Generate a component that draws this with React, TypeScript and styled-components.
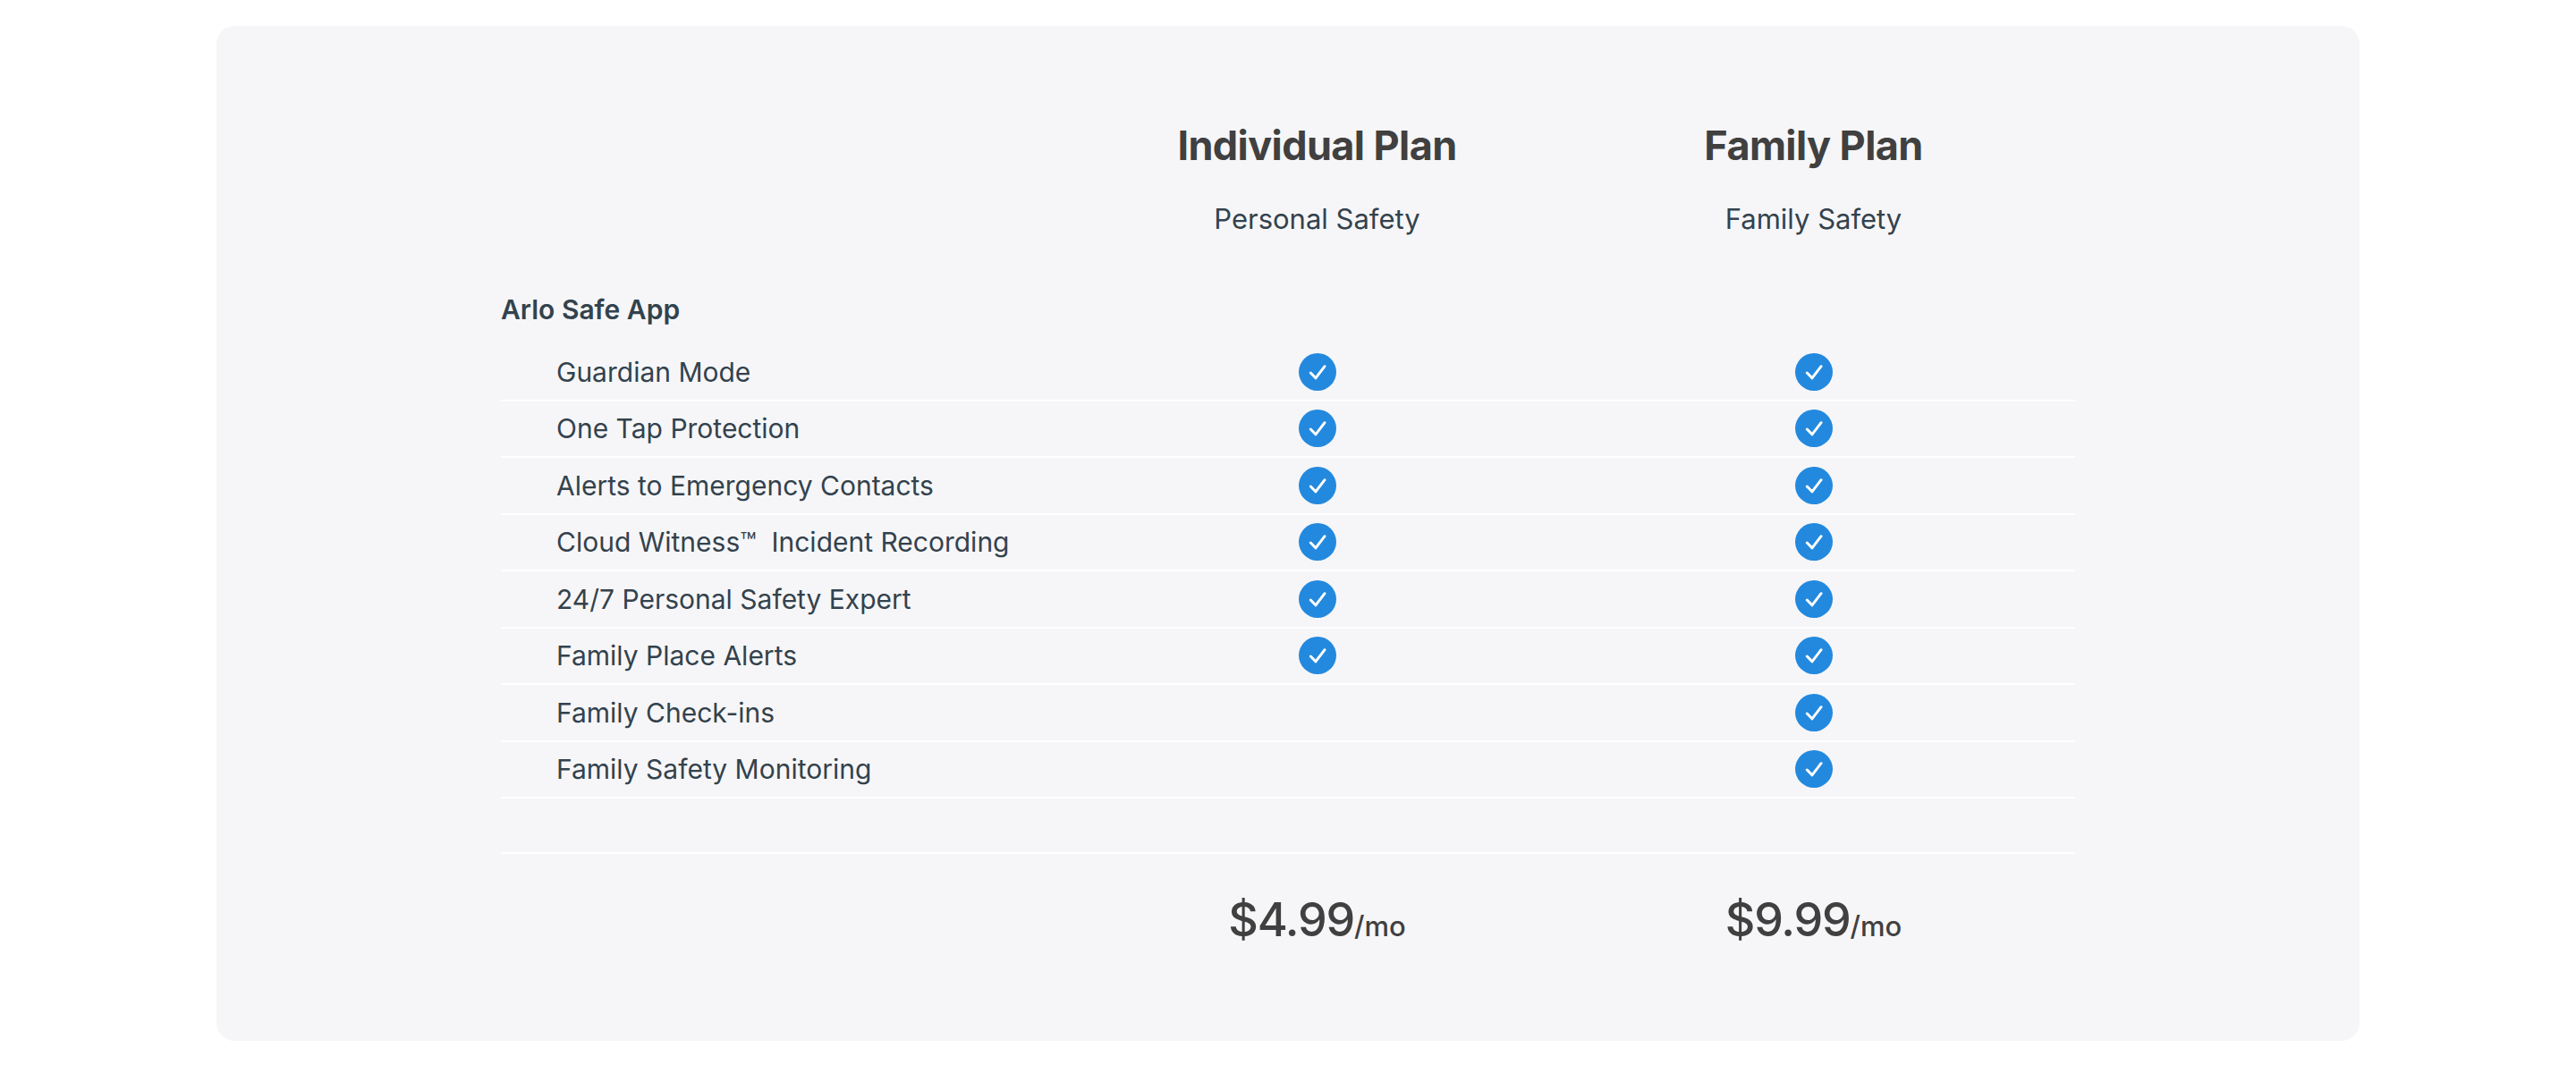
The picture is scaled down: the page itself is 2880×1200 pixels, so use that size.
import React from 'react';
import styled, { createGlobalStyle } from 'styled-components';

const GlobalStyle = createGlobalStyle`
  html, body {
    margin: 0;
    padding: 0;
    background: #ffffff;
    font-family: Inter, "Noto Sans", "Liberation Sans", sans-serif;
    -webkit-font-smoothing: antialiased;
  }
`;

const Page = styled.div`
  padding-top: 29px;
`;

const Card = styled.section`
  width: 2396px;
  margin: 0 auto;
  box-sizing: border-box;
  padding: 105px 0 96px;
  background: #f6f6f8;
  border-radius: 20px;
`;

const Table = styled.div`
  width: 1760px;
  margin: 0 auto;
  display: grid;
  grid-template-columns: 635px 555px 555px 1fr;
`;

const PlanHead = styled.div`
  display: flex;
  flex-direction: column;
  align-items: center;
  text-align: center;
`;

const PlanTitle = styled.h2`
  margin: 0;
  font-size: 45px;
  line-height: 58px;
  font-weight: 700;
  color: #404040;
  letter-spacing: -0.6px;
`;

const PlanSub = styled.p`
  margin: 33px 0 0;
  font-size: 31px;
  line-height: 40px;
  font-weight: 400;
  color: #33424d;
`;

const GroupTitle = styled.h3`
  grid-column: 1 / -1;
  margin: 63px 0 21px;
  font-size: 30px;
  line-height: 36px;
  font-weight: 600;
  color: #33424d;
`;

const Row = styled.div`
  display: contents;
`;

const Cell = styled.div<{ $first?: boolean }>`
  height: 63.5px;
  box-sizing: border-box;
  border-bottom: 2px solid #ffffff;
  display: flex;
  align-items: center;
  justify-content: ${p => (p.$first ? 'flex-start' : 'center')};
  padding-left: ${p => (p.$first ? '62px' : '0')};
  font-size: 30px;
  color: #33424d;
  white-space: nowrap;
`;

const Spacer = styled.div`
  height: 62px;
`;

const PriceCell = styled.div`
  margin-top: 42px;
  display: flex;
  justify-content: center;
  align-items: baseline;
  line-height: 64px;
  color: #404040;
`;

const Amount = styled.span`
  font-size: 52px;
  font-weight: 500;
  letter-spacing: -1.2px;
`;

const Per = styled.span`
  font-size: 31px;
  font-weight: 500;
`;

const Check = () => (
  <svg width="42" height="42" viewBox="0 0 24 24" aria-hidden="true">
    <circle cx="12" cy="12" r="12" fill="#2389de" />
    <path
      d="M7.6 12.6 L10.8 15.9 L16.6 8.4"
      fill="none"
      stroke="#ffffff"
      strokeWidth="1.7"
      strokeLinecap="round"
      strokeLinejoin="round"
    />
  </svg>
);

const features: { name: string; individual: boolean; family: boolean }[] = [
  { name: 'Guardian Mode', individual: true, family: true },
  { name: 'One Tap Protection', individual: true, family: true },
  { name: 'Alerts to Emergency Contacts', individual: true, family: true },
  { name: 'Cloud Witness\u2122\u00a0 Incident Recording', individual: true, family: true },
  { name: '24/7 Personal Safety Expert', individual: true, family: true },
  { name: 'Family Place Alerts', individual: true, family: true },
  { name: 'Family Check-ins', individual: false, family: true },
  { name: 'Family Safety Monitoring', individual: false, family: true },
];

export default function App() {
  return (
    <Page>
      <GlobalStyle />
      <Card>
        <Table>
          <div />
          <PlanHead>
            <PlanTitle>Individual Plan</PlanTitle>
            <PlanSub>Personal Safety</PlanSub>
          </PlanHead>
          <PlanHead>
            <PlanTitle>Family Plan</PlanTitle>
            <PlanSub>Family Safety</PlanSub>
          </PlanHead>
          <div />

          <GroupTitle>Arlo Safe App</GroupTitle>

          {features.map(f => (
            <Row key={f.name}>
              <Cell $first>{f.name}</Cell>
              <Cell>{f.individual && <Check />}</Cell>
              <Cell>{f.family && <Check />}</Cell>
              <Cell />
            </Row>
          ))}

          <Row>
            <Cell as={Spacer} $first />
            <Cell as={Spacer} />
            <Cell as={Spacer} />
            <Cell as={Spacer} />
          </Row>

          <div />
          <PriceCell>
            <Amount>$4.99</Amount>
            <Per>/mo</Per>
          </PriceCell>
          <PriceCell>
            <Amount>$9.99</Amount>
            <Per>/mo</Per>
          </PriceCell>
          <div />
        </Table>
      </Card>
    </Page>
  );
}
